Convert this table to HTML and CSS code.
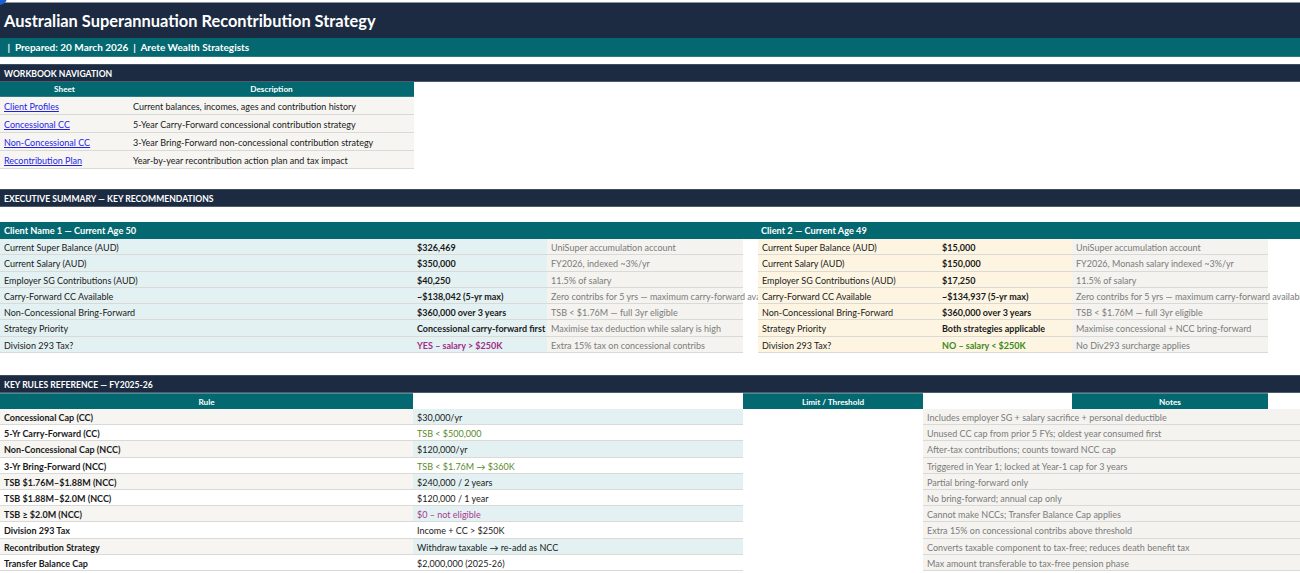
FILE: index.html
```html
<!DOCTYPE html>
<html lang="en">
<head>
<meta charset="utf-8">
<title>Australian Superannuation Recontribution Strategy</title>
<link rel="stylesheet" href="styles.css">
</head>
<body>
<div class="cursor-dot"></div>
<div class="page">
  <div class="title-bar">Australian Superannuation Recontribution Strategy</div>
  <div class="sub-bar">&nbsp;|&nbsp; Prepared: 20 March 2026 &nbsp;|&nbsp; Arete Wealth Strategists</div>

  <div class="section-bar nav-bar">WORKBOOK NAVIGATION</div>
  <div class="nav-table">
    <div class="nav-head">
      <div class="c-sheet center">Sheet</div>
      <div class="c-desc center">Description</div>
    </div>
    <div class="nav-row"><div class="c-sheet"><a href="#">Client Profiles</a></div><div class="c-desc">Current balances, incomes, ages and contribution history</div></div>
    <div class="nav-row"><div class="c-sheet"><a href="#">Concessional CC</a></div><div class="c-desc">5-Year Carry-Forward concessional contribution strategy</div></div>
    <div class="nav-row"><div class="c-sheet"><a href="#">Non-Concessional CC</a></div><div class="c-desc">3-Year Bring-Forward non-concessional contribution strategy</div></div>
    <div class="nav-row"><div class="c-sheet"><a href="#">Recontribution Plan</a></div><div class="c-desc">Year-by-year recontribution action plan and tax impact</div></div>
  </div>

  <div class="section-bar exec-bar">EXECUTIVE SUMMARY — KEY RECOMMENDATIONS</div>
  <div class="clients">
    <div class="client client-1">
      <div class="client-head">Client Name 1 — Current Age 50</div>
      <div class="ex-row"><div class="ex-label">Current Super Balance (AUD)</div><div class="ex-val">$326,469</div><div class="ex-note">UniSuper accumulation account</div></div>
      <div class="ex-row"><div class="ex-label">Current Salary (AUD)</div><div class="ex-val">$350,000</div><div class="ex-note">FY2026, indexed ~3%/yr</div></div>
      <div class="ex-row"><div class="ex-label">Employer SG Contributions (AUD)</div><div class="ex-val">$40,250</div><div class="ex-note">11.5% of salary</div></div>
      <div class="ex-row"><div class="ex-label">Carry-Forward CC Available</div><div class="ex-val">~$138,042 (5-yr max)</div><div class="ex-note">Zero contribs for 5 yrs — maximum carry-forward available</div></div>
      <div class="ex-row"><div class="ex-label">Non-Concessional Bring-Forward</div><div class="ex-val">$360,000 over 3 years</div><div class="ex-note">TSB &lt; $1.76M — full 3yr eligible</div></div>
      <div class="ex-row"><div class="ex-label">Strategy Priority</div><div class="ex-val">Concessional carry-forward first</div><div class="ex-note">Maximise tax deduction while salary is high</div></div>
      <div class="ex-row"><div class="ex-label">Division 293 Tax?</div><div class="ex-val t-magenta">YES – salary &gt; $250K</div><div class="ex-note">Extra 15% tax on concessional contribs</div></div>
    </div>
    <div class="client client-2">
      <div class="client-head">Client 2 — Current Age 49</div>
      <div class="ex-row"><div class="ex-label">Current Super Balance (AUD)</div><div class="ex-val">$15,000</div><div class="ex-note">UniSuper accumulation account</div></div>
      <div class="ex-row"><div class="ex-label">Current Salary (AUD)</div><div class="ex-val">$150,000</div><div class="ex-note">FY2026, Monash salary indexed ~3%/yr</div></div>
      <div class="ex-row"><div class="ex-label">Employer SG Contributions (AUD)</div><div class="ex-val">$17,250</div><div class="ex-note">11.5% of salary</div></div>
      <div class="ex-row"><div class="ex-label">Carry-Forward CC Available</div><div class="ex-val">~$134,937 (5-yr max)</div><div class="ex-note">Zero contribs for 5 yrs — maximum carry-forward available</div></div>
      <div class="ex-row"><div class="ex-label">Non-Concessional Bring-Forward</div><div class="ex-val">$360,000 over 3 years</div><div class="ex-note">TSB &lt; $1.76M — full 3yr eligible</div></div>
      <div class="ex-row"><div class="ex-label">Strategy Priority</div><div class="ex-val">Both strategies applicable</div><div class="ex-note">Maximise concessional + NCC bring-forward</div></div>
      <div class="ex-row"><div class="ex-label">Division 293 Tax?</div><div class="ex-val t-green-b">NO – salary &lt; $250K</div><div class="ex-note">No Div293 surcharge applies</div></div>
    </div>
  </div>

  <div class="section-bar rules-bar">KEY RULES REFERENCE — FY2025-26</div>
  <div class="rules">
    <div class="rules-head">
      <div class="r-rule th">Rule</div>
      <div class="r-val"></div>
      <div class="r-limit th">Limit / Threshold</div>
      <div class="r-gap"></div>
      <div class="r-notes-h th">Notes</div>
      <div class="r-rest"></div>
    </div>
    <div class="r-row"><div class="r-rule">Concessional Cap (CC)</div><div class="r-val">$30,000/yr</div><div class="r-limit"></div><div class="r-note">Includes employer SG + salary sacrifice + personal deductible</div></div>
    <div class="r-row"><div class="r-rule">5-Yr Carry-Forward (CC)</div><div class="r-val t-green">TSB &lt; $500,000</div><div class="r-limit"></div><div class="r-note">Unused CC cap from prior 5 FYs; oldest year consumed first</div></div>
    <div class="r-row"><div class="r-rule">Non-Concessional Cap (NCC)</div><div class="r-val">$120,000/yr</div><div class="r-limit"></div><div class="r-note">After-tax contributions; counts toward NCC cap</div></div>
    <div class="r-row"><div class="r-rule">3-Yr Bring-Forward (NCC)</div><div class="r-val t-green">TSB &lt; $1.76M → $360K</div><div class="r-limit"></div><div class="r-note">Triggered in Year 1; locked at Year-1 cap for 3 years</div></div>
    <div class="r-row"><div class="r-rule">TSB $1.76M–$1.88M (NCC)</div><div class="r-val">$240,000 / 2 years</div><div class="r-limit"></div><div class="r-note">Partial bring-forward only</div></div>
    <div class="r-row"><div class="r-rule">TSB $1.88M–$2.0M (NCC)</div><div class="r-val">$120,000 / 1 year</div><div class="r-limit"></div><div class="r-note">No bring-forward; annual cap only</div></div>
    <div class="r-row"><div class="r-rule">TSB ≥ $2.0M (NCC)</div><div class="r-val t-magenta-n">$0 – not eligible</div><div class="r-limit"></div><div class="r-note">Cannot make NCCs; Transfer Balance Cap applies</div></div>
    <div class="r-row"><div class="r-rule">Division 293 Tax</div><div class="r-val">Income + CC &gt; $250K</div><div class="r-limit"></div><div class="r-note">Extra 15% on concessional contribs above threshold</div></div>
    <div class="r-row"><div class="r-rule">Recontribution Strategy</div><div class="r-val">Withdraw taxable → re-add as NCC</div><div class="r-limit"></div><div class="r-note">Converts taxable component to tax-free; reduces death benefit tax</div></div>
    <div class="r-row"><div class="r-rule">Transfer Balance Cap</div><div class="r-val">$2,000,000 (2025-26)</div><div class="r-limit"></div><div class="r-note">Max amount transferable to tax-free pension phase</div></div>
  </div>
</div>
</body>
</html>
```

FILE: styles.css
```css
* { box-sizing: border-box; }
html, body { margin: 0; padding: 0; }
body {
  width: 1300px;
  height: 573px;
  overflow: hidden;
  background: #ffffff;
  font-family: Lato, "Open Sans", sans-serif;
  font-size: 9px;
  color: #1a1a1a;
  position: relative;
}
.cursor-dot {
  position: absolute;
  left: -8px;
  top: -10px;
  width: 15px;
  height: 15px;
  border-radius: 50%;
  background: #1b5fd6;
  z-index: 5;
}
.page { padding-top: 2px; }

.title-bar {
  height: 36px;
  border-top: 1px solid #8b96a4;
  background: #1c2b41;
  color: #fff;
  font-weight: 700;
  font-size: 16.4px;
  padding: 8px 0 0 4px;
  white-space: nowrap;
}
.sub-bar {
  height: 19px;
  background: #036870;
  color: #fff;
  font-weight: 700;
  font-size: 10px;
  padding: 3px 0 0 5px;
  white-space: pre;
  border-bottom: 1px solid #2d7d83;
}

.section-bar {
  height: 18px;
  background: #1c2b41;
  color: #fff;
  font-weight: 700;
  font-size: 8.6px;
  padding: 4px 0 0 4px;
  border-top: 1px solid #3e4c5f;
  border-bottom: 1px solid #4d5b6c;
}
.nav-bar { margin-top: 7px; }
.exec-bar { margin-top: 20px; }
.rules-bar { margin-top: 22px; }

/* Navigation table */
.nav-table { width: 414px; }
.nav-head {
  display: flex;
  height: 15px;
  background: #036870;
  color: #fff;
  font-weight: 700;
  font-size: 8.2px;
  border-bottom: 1px solid #2d7d83;
}
.nav-head > div { padding-top: 2px; }
.nav-row {
  display: flex;
  height: 18px;
  background: #f6f5f1;
  border-bottom: 1px solid #d9d9d6;
}
.nav-row > div { padding: 3.5px 0 0 4px; white-space: nowrap; }
.c-sheet { width: 129px; }
.c-desc { flex: 1; }
.nav-row .c-desc { padding-left: 4px; }
.center { text-align: center; }
.nav-row a { color: #1f1fe6; text-decoration: underline; }

/* Executive summary */
.clients {
  display: flex;
  margin-top: 15px;
}
.client-head {
  height: 17px;
  background: #036870;
  color: #fff;
  font-weight: 700;
  font-size: 9.2px;
  padding: 3px 0 0 4px;
  white-space: nowrap;
}
.client-1 { width: 758px; overflow: hidden; }
.client-2 { flex: 1; overflow: hidden; }
.client-2 .client-head { padding-left: 3px; }
.ex-row {
  display: flex;
  height: 16.3px;
}
.ex-row > div {
  flex: none;
  padding: 3px 0 0 4px;
  white-space: nowrap;
  border-bottom: 1px solid #d9d9d6;
}
.client-1 .ex-label { width: 413px; background: #e3f1f2; }
.client-1 .ex-val { width: 134px; background: #e3f1f2; font-weight: 700; }
.client-2 .ex-label { width: 180px; background: #fdf5e2; }
.client-2 .ex-val { width: 134px; background: #fdf5e2; font-weight: 700; }
.ex-note {
  width: 196px;
  background: #f4f3ef;
  color: #7b7b7b;
  overflow: visible;
}
.t-magenta { color: #a22d86; }
.t-green-b { color: #3b8a1e; }
.t-green { color: #5a8a2c; }
.t-magenta-n { color: #a53b8e; }

/* Key rules */
.rules-head {
  display: flex;
  height: 16px;
  font-weight: 700;
  font-size: 8.2px;
}
.rules-head > div { flex: none; }
.rules-head .th {
  background: #036870;
  color: #fff;
  text-align: center;
  padding-top: 2.5px;
  border-top: 1px solid #4a8c91;
}
.rules-head .r-rule { width: 413px; }
.rules-head .r-val { width: 330px; }
.rules-head .r-limit { width: 180px; }
.rules-head .r-gap { width: 149px; }
.rules-head .r-notes-h { width: 196px; }
.rules-head .r-rest { flex: 1; }

.r-row {
  display: flex;
  height: 16.2px;
}
.r-row > div {
  flex: none;
  padding: 3px 0 0 4px;
  white-space: nowrap;
}
.r-row .r-rule {
  width: 413px;
  font-weight: 700;
  background: #f6f5f1;
  border-bottom: 1px solid #d9d9d6;
}
.r-row:nth-child(odd) .r-rule { background: #ffffff; }
.r-row .r-val {
  width: 330px;
  background: #e3f1f2;
  border-bottom: 1px solid #d9d9d6;
}
.r-row:nth-child(odd) .r-val { background: #ffffff; }
.r-row .r-limit { width: 180px; }
.r-row .r-note {
  flex: 1;
  background: #f4f3ef;
  color: #7b7b7b;
  border-bottom: 1px solid #d9d9d6;
}
```
